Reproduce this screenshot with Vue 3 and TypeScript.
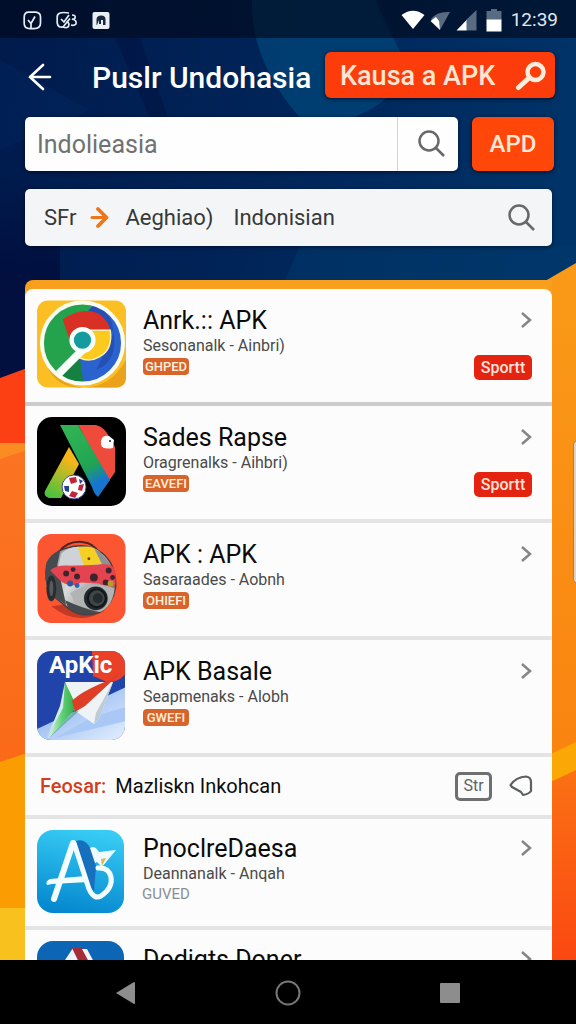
<script setup lang="ts">
import { ref } from 'vue'

interface AppEntry {
  id: string
  name: string
  subtitle?: string
  tag?: string
  plainTag?: boolean
  compact?: boolean
  action?: string
}

const query = ref('')

const topApps: AppEntry[] = [
  { id: 'chrome', name: 'Anrk.:: APK', subtitle: 'Sesonanalk - Ainbri)', tag: 'GHPED', action: 'Sportt' },
  { id: 'sades', name: 'Sades Rapse', subtitle: 'Oragrenalks - Aihbri)', tag: 'EAVEFI', action: 'Sportt' },
  { id: 'helmet', name: 'APK : APK', subtitle: 'Sasaraades - Aobnh', tag: 'OHIEFI' },
  { id: 'plane', name: 'APK Basale', subtitle: 'Seapmenaks - Alobh', tag: 'GWEFI' },
]

const moreApps: AppEntry[] = [
  { id: 'a3', name: 'PnoclreDaesa', subtitle: 'Deannanalk - Anqah', tag: 'GUVED', plainTag: true, compact: true },
  { id: 'dodi', name: 'Dodigts Doner', compact: true },
]

const groups = [topApps, moreApps]
</script>

<template>
  <div class="page">
    <svg class="backdrop" viewBox="0 0 576 1024" preserveAspectRatio="none" aria-hidden="true">
      <defs>
        <linearGradient id="navy" x1="0" y1="0" x2="1" y2="0.3">
          <stop offset="0" stop-color="#001a4c" />
          <stop offset="0.45" stop-color="#002458" />
          <stop offset="1" stop-color="#00356a" />
        </linearGradient>
        <linearGradient id="leftOrange" x1="0" y1="0" x2="0" y2="1">
          <stop offset="0" stop-color="#fb7422" />
          <stop offset="1" stop-color="#fa6a18" />
        </linearGradient>
        <linearGradient id="leftShade" x1="0" y1="0" x2="0" y2="1">
          <stop offset="0" stop-color="#000a38" stop-opacity="0" />
          <stop offset="0.5" stop-color="#000a38" stop-opacity="0.7" />
        </linearGradient>
        <linearGradient id="rightOrange" x1="0" y1="0" x2="0" y2="1">
          <stop offset="0" stop-color="#fa9a18" />
          <stop offset="1" stop-color="#f98410" />
        </linearGradient>
        <linearGradient id="rightLow" x1="0" y1="0" x2="0" y2="1">
          <stop offset="0" stop-color="#fa7414" />
          <stop offset="1" stop-color="#fb4711" />
        </linearGradient>
      </defs>
      <rect width="576" height="1024" fill="url(#navy)" />
      <path d="M252 0H375L405 62Q400 100 352 118H300Q250 60 252 0Z" fill="#004a7c" opacity="0.65" />
      <path d="M115 38H140L168 118H150Z" fill="#00123f" opacity="0.5" />
      <path d="M0 170L60 200V380H0Z" fill="url(#leftShade)" />
      <path d="M0 60L90 110L0 150Z" fill="#003069" opacity="0.3" />
      <path d="M300 246H576V290H280Z" fill="#003a6b" opacity="0.5" />
      <path d="M0 378L30 367V450H0Z" fill="#fd3f14" />
      <path d="M0 443H30V770H0Z" fill="url(#leftOrange)" />
      <path d="M0 443H30V449L0 459Z" fill="#fb8c23" />
      <path d="M0 762L30 752V910H0Z" fill="#fc9c03" />
      <path d="M0 908H30V964H0Z" fill="#f8c11e" />
      <path d="M540 284L576 263V760H540Z" fill="url(#rightOrange)" />
      <path d="M540 770L576 755V964H540Z" fill="url(#rightLow)" />
      <path d="M540 759L576 742V770L540 787Z" fill="#fba706" />
    </svg>

    <header class="status">
      <div class="status-left">
        <svg width="19" height="19" viewBox="0 0 19 19" fill="none" stroke="#e4edf5" stroke-width="1.7">
          <path d="M6 1.2H13Q17.5 2 17.5 6V12Q17.5 17.6 11 17.6H7Q1.2 17.6 1.2 12.5V6Q1.2 1.2 6 1.2Z" />
          <path d="M5 9L8 12.5L12 5.5M8 12.5V17" />
        </svg>
        <svg width="22" height="19" viewBox="0 0 22 19" fill="none" stroke="#e4edf5" stroke-width="1.7">
          <path d="M13 2Q1 0 1.2 6V12Q2 17 7 16L14 7.500" />
          <path d="M5 8L8 11L13 4M7 16Q13 18 13 13L11 10" />
          <path d="M16 4Q20 4 19 7Q18 9 16 8Q21 9 20 13Q18 15 15 14" />
        </svg>
        <svg width="18" height="19" viewBox="0 0 18 19">
          <rect x="0.500" y="1" width="17" height="17" rx="2" fill="#e9eef3" />
          <path d="M4.500 14V8Q5 4.500 9 4.500Q13.500 4.500 13.500 8V14H11V9H9V13H7V9L5 14Z" fill="#18283e" />
        </svg>
      </div>
      <div class="status-right">
        <svg width="24" height="20" viewBox="0 0 24 20">
          <path d="M0.500 5Q12 -3.500 23.500 5L12 19Z" fill="#fff" />
        </svg>
        <svg width="21" height="21" viewBox="0 0 21 21">
          <path d="M1 9Q7 1 20 2L10 20Z" fill="#596b80" />
          <path d="M0.500 11L6 7L9 11L10 20Z" fill="#fff" />
        </svg>
        <svg width="21" height="21" viewBox="0 0 21 21">
          <path d="M20.500 0V20.500H10V10Z" fill="#596b80" />
          <path d="M0.500 20.500L10.500 10V20.500Z" fill="#fff" />
        </svg>
        <svg width="16" height="23" viewBox="0 0 16 23">
          <path d="M5 0H11V2H15.500V11H0.500V2H5Z" fill="#596b80" />
          <rect x="0.500" y="10.500" width="15" height="12" fill="#fff" />
        </svg>
        <time class="clock">12:39</time>
      </div>
    </header>

    <div class="titlebar">
      <button class="icon-button back" type="button" aria-label="Back">
        <svg width="24" height="28" viewBox="0 0 24 28" fill="none" stroke="#fff" stroke-width="2.600" stroke-linecap="round">
          <path d="M15 2L2 14L15 26M2 14H22" />
        </svg>
      </button>
      <h1>Puslr Undohasia</h1>
      <button class="promo-button" type="button">
        <span>Kausa a APK</span>
        <svg width="32" height="30" viewBox="0 0 32 30" fill="none" stroke="#ffeedd" stroke-linecap="round">
          <circle cx="20.500" cy="11" r="8" stroke-width="4.500" />
          <path d="M14.500 16.500L3.500 26.500" stroke-width="5" />
        </svg>
      </button>
    </div>

    <form class="search-row" @submit.prevent>
      <div class="search-box">
        <input v-model="query" type="text" placeholder="Indolieasia" aria-label="Search apps" />
        <button class="icon-button search-go" type="submit" aria-label="Search">
          <svg class="lens" viewBox="0 0 28 28"><circle cx="11" cy="11" r="9.500" /><path d="M18 18L26 26" /></svg>
        </button>
      </div>
      <button class="apd" type="button">APD</button>
    </form>

    <nav class="filter" aria-label="Filter">
      <a href="#sfr">SFr</a>
      <svg class="arrow" width="19" height="23" viewBox="0 0 19 23" fill="none" stroke="#ef7618" stroke-linecap="round" stroke-linejoin="round">
        <path d="M2 11.500H14" stroke-width="3" />
        <path d="M8 3L16.500 11.500L8 20" stroke-width="3.800" />
      </svg>
      <a class="region" href="#region">Aeghiao)</a>
      <a href="#language">Indonisian</a>
      <button class="icon-button filter-go" type="button" aria-label="Search filters">
        <svg class="lens" viewBox="0 0 28 28"><circle cx="11" cy="11" r="9.500" /><path d="M18 18L26 26" /></svg>
      </button>
    </nav>

    <main class="panel">
      <template v-for="(group, g) in groups" :key="g">
        <section v-if="g === 1" class="feature">
          <strong>Feosar:</strong>
          <span class="feature-text">Mazliskn Inkohcan</span>
          <button class="str" type="button">Str</button>
          <button class="icon-button" type="button" aria-label="Tag">
            <svg width="24" height="22" viewBox="0 0 24 22" fill="none" stroke="#5c5f61" stroke-width="2.200" stroke-linejoin="round">
              <path d="M1.500 10Q7 2 17 1.500Q22 2 22 7V16Q20 19 14 20L12 17L3 12Z" />
            </svg>
          </button>
        </section>
        <ul>
          <li v-for="(app, i) in group" :key="app.id" :class="{ compact: app.compact, raised: g === 0 && i === 0 }">
            <svg v-if="app.id === 'chrome'" class="logo" viewBox="0 0 90 89">
              <defs>
                <clipPath id="disc"><circle cx="46" cy="43" r="41" /></clipPath>
              </defs>
              <rect width="90" height="88" rx="11" fill="#fbbf24" />
              <path d="M10 66Q20 90 48 88H79Q90 88 90 77V60Q75 88 46 88Q22 85 10 66Z" fill="#e9a21a" />
              <g clip-path="url(#disc)">
                <rect width="90" height="90" fill="#25a34c" />
                <path d="M56 0Q90 5 90 45Q85 85 46 90L43 58L74 30Z" fill="#2a62cf" />
                <path d="M40 0H60L75 20Q86 60 60 70L78 32Z" fill="#244fb5" />
                <path d="M30 0H62L50 12L28 19Z" fill="#25a34c" />
                <path d="M43 55L48 90Q20 88 20 72Z" fill="#158040" />
                <path d="M26 19Q45 6 62 13Q72 20 74 30H50Q38 30 34 43Z" fill="#d93026" />
                <path d="M50 30H74Q77 50 63 57Q53 63 43 58L50 45Z" fill="#fcc91f" stroke="#fff1b0" stroke-width="1.500" />
              </g>
              <path d="M49 47L22 74" stroke="#f7fffb" stroke-width="8" fill="none" />
              <circle cx="46" cy="40" r="11" fill="#139b9d" stroke="#f7fffb" stroke-width="4.500" />
              <circle cx="46" cy="43" r="41" fill="none" stroke="#f8fbf4" stroke-width="4" />
            </svg>

            <svg v-else-if="app.id === 'sades'" class="logo" viewBox="0 0 89 89">
              <defs>
                <linearGradient id="legA" x1="0.700" y1="0" x2="0.300" y2="1">
                  <stop offset="0.200" stop-color="#f6b51a" />
                  <stop offset="1" stop-color="#4cc33e" />
                </linearGradient>
                <linearGradient id="legB" x1="0.300" y1="0" x2="0.700" y2="1">
                  <stop offset="0" stop-color="#31b354" />
                  <stop offset="0.600" stop-color="#1fa454" />
                  <stop offset="0.850" stop-color="#1775d0" />
                </linearGradient>
              </defs>
              <rect width="89" height="89" rx="15" fill="#000" />
              <path d="M32 30L42 47L24 81H12Q6 79 8 74Z" fill="url(#legA)" />
              <path d="M41 8H59Q66 10 70 16L78 30V55L72 64Z" fill="#ee4b3d" />
              <path d="M23 8H41L73 63L61 80Q57 77 55 70Z" fill="url(#legB)" />
              <path d="M64 24Q65 18 72 19L77 23L76 31Q66 33 64 28Z" fill="#fff" />
              <circle cx="73" cy="24" r="1" fill="#222" />
              <circle cx="37" cy="70" r="12" fill="#fff" stroke="#3f4d8e" stroke-width="1" />
              <g fill="#c4243b">
                <path d="M32 61L39 60L40 65L34 67Z" /><path d="M42 68L47 67L45 74L41 73Z" />
                <path d="M35 74L41 76L38 81L32 79Z" />
              </g>
              <path d="M27 69L32 69L32 75L28 74ZM42 62L46 64L43 67Z" fill="#28408f" />
            </svg>

            <svg v-else-if="app.id === 'helmet'" class="logo" viewBox="0 0 89 90">
              <defs>
                <linearGradient id="shell" x1="0" y1="0" x2="1" y2="0.600">
                  <stop offset="0" stop-color="#77797c" />
                  <stop offset="0.500" stop-color="#dadada" />
                  <stop offset="1" stop-color="#77797c" />
                </linearGradient>
              </defs>
              <rect width="89" height="90" rx="14" fill="#fb5631" />
              <path d="M14 73Q40 94 67 78L75 65Z" fill="#c43925" />
              <path d="M22 18Q30 7 45 8Q57 9 62 19" fill="none" stroke="#4f2423" stroke-width="2" />
              <path d="M10 32Q16 18 27 15Q49 7 65 19Q80 31 79 54Q76 71 63 79Q45 86 31 75L14 61Q6 47 10 32Z" fill="url(#shell)" stroke="#4b393a" stroke-width="1.500" />
              <path d="M9 29Q14 19 23 17L20 31L24 49L29 72L13 60Q5 46 9 29Z" fill="#454a4e" />
              <ellipse cx="14" cy="55" rx="5" ry="13" fill="#282d31" />
              <ellipse cx="14" cy="55" rx="2" ry="8" fill="#575b5e" />
              <path d="M24 20Q31 13 42 13L46 30L21 33Z" fill="#cfd3d7" />
              <path d="M41 14Q54 10 63 18L65 30L47 32Z" fill="#f5cf23" />
              <path d="M57 14L64 19L74 31L65 30Z" fill="#8c9197" />
              <path d="M13 37Q18 31 33 32L61 31Q78 28 79 40V51Q73 57 62 50L44 49Q35 55 24 48Z" fill="#e44450" />
              <g fill="#40242d">
                <circle cx="29" cy="40" r="3" /><circle cx="36" cy="36" r="2.500" /><circle cx="40" cy="43" r="3" />
                <circle cx="57" cy="44" r="4" /><circle cx="72" cy="37" r="3" /><circle cx="76" cy="44" r="2.500" /><circle cx="69" cy="49" r="3" />
              </g>
              <circle cx="33" cy="50" r="3" fill="#2b579e" /><circle cx="40" cy="52" r="2.500" fill="#2e63b2" />
              <circle cx="74" cy="50" r="3" fill="#b3a128" />
              <circle cx="52" cy="25" r="1.500" fill="#604f18" />
              <path d="M33 60Q55 45 78 55Q76 73 63 79L39 72Z" fill="#b2b3b4" />
              <path d="M28 67Q43 74 61 79Q45 86 31 75Z" fill="#444a4d" />
              <circle cx="59" cy="65" r="12" fill="#22282b" />
              <circle cx="60" cy="65" r="9" fill="#404548" stroke="#101619" stroke-width="2" />
              <circle cx="61" cy="65" r="5" fill="#252a2d" />
            </svg>

            <svg v-else-if="app.id === 'plane'" class="logo" viewBox="0 0 89 89">
              <defs>
                <clipPath id="tile"><rect width="88" height="89" rx="14" /></clipPath>
                <linearGradient id="sky" x1="0" y1="0" x2="1" y2="1">
                  <stop offset="0" stop-color="#7ba6eb" />
                  <stop offset="1" stop-color="#e3efff" />
                </linearGradient>
                <linearGradient id="fold" x1="0" y1="0" x2="1" y2="0">
                  <stop offset="0" stop-color="#e4f7e9" />
                  <stop offset="0.500" stop-color="#5fcf75" />
                  <stop offset="1" stop-color="#29a642" />
                </linearGradient>
              </defs>
              <g clip-path="url(#tile)">
                <rect width="89" height="89" fill="#2144aa" />
                <path d="M0 78L89 36V89H0Z" fill="url(#sky)" />
                <path d="M18 87L55 66L89 56V70Z" fill="#a9c8f5" />
                <path d="M55 0H89V22Q82 32 70 31L56 25Z" fill="#eb4028" />
                <path d="M28 31H76L62 68L57 73L37 59Z" fill="#eef4f6" />
                <path d="M76 31L62 68L57 73L59 62Z" fill="#bfcbd4" />
                <path d="M28 31L40 56L11 88L25 50Z" fill="url(#fold)" />
                <path d="M28 31L23 55L10 87L26 57Z" fill="#d5e9ed" />
                <path d="M86 20L48 55L38 61L35 50Q43 41 70 30Z" fill="#e03d27" />
                <path d="M11 88L38 59L42 60Z" fill="#168b45" opacity="0.4" />
              </g>
              <text x="12" y="22" class="logo-text">ApKic</text>
            </svg>

            <svg v-else-if="app.id === 'a3'" class="logo" viewBox="0 0 87 83">
              <defs>
                <linearGradient id="cyan" x1="0.600" y1="0" x2="0.400" y2="1">
                  <stop offset="0" stop-color="#37ccf4" />
                  <stop offset="1" stop-color="#0588cf" />
                </linearGradient>
              </defs>
              <rect width="87" height="83" rx="16" fill="url(#cyan)" />
              <path d="M52 19Q57 14 62 22L79 20L65 37L60 32L55 35Z" fill="#effbff" />
              <path d="M39 11Q48 8 53 18L59 36L57 62L50 52Z" fill="#1670bd" />
              <path d="M36 13L17 69" stroke="#f3fcff" stroke-width="6" stroke-linecap="round" />
              <path d="M37 13L52 59Q57 70 64 66Q76 58 74 47Q72 37 61 38" fill="none" stroke="#f3fcff" stroke-width="5" stroke-linecap="round" />
              <path d="M10 55Q8 51 13 49L49 46L51 52L15 54Z" fill="#f3fcff" />
              <path d="M64 29L69 28L65 36Z" fill="#d8b957" />
            </svg>

            <svg v-else class="logo" viewBox="0 0 87 83">
              <rect width="87" height="83" rx="16" fill="#0d65b5" />
              <path d="M36 7L26 22V83H45L43 9Z" fill="#edf3fa" />
              <path d="M35 7H45L62 38H50Z" fill="#a62d38" />
              <path d="M45 8H50L65 36H60Z" fill="#f5f4f7" />
            </svg>

            <div class="details">
              <h2><a :href="'#' + app.id">{{ app.name }}</a></h2>
              <p v-if="app.subtitle">{{ app.subtitle }}</p>
              <span v-if="app.tag" class="tag" :class="{ plain: app.plainTag }">{{ app.tag }}</span>
            </div>
            <div class="side">
              <svg class="chevron" width="12" height="18" viewBox="0 0 12 18" aria-hidden="true"><path d="M2 2L10 9L2 16" /></svg>
              <button v-if="app.action" class="action" type="button">{{ app.action }}</button>
            </div>
          </li>
        </ul>
      </template>
    </main>

    <div class="edge-handle"></div>

    <footer class="system-nav">
      <button class="icon-button" type="button" aria-label="System back">
        <svg width="22" height="24" viewBox="0 0 22 24"><path d="M1 12L19 1Q20 1 20 2V22Q20 23 19 23Z" fill="#8d8d8d" /></svg>
      </button>
      <button class="icon-button" type="button" aria-label="Home">
        <svg width="26" height="26" viewBox="0 0 26 26"><circle cx="13" cy="13" r="11.500" fill="none" stroke="#777" stroke-width="2" /></svg>
      </button>
      <button class="icon-button" type="button" aria-label="Recent apps">
        <svg width="20" height="20" viewBox="0 0 20 20"><rect width="20" height="20" rx="1" fill="#8d8d8d" /></svg>
      </button>
    </footer>
  </div>
</template>

<style>
body {
  margin: 0;
  background: #000;
}
</style>

<style scoped>
.page,
.page * {
  box-sizing: border-box;
}

.page {
  position: relative;
  display: flex;
  flex-direction: column;
  height: 100vh;
  overflow: hidden;
  isolation: isolate;
  font-family: Roboto, "Liberation Sans", sans-serif;
  color: #0b0b0b;
}

.backdrop {
  position: absolute;
  inset: 0;
  width: 100%;
  height: 100%;
  z-index: -1;
}

button,
input {
  font: inherit;
  border: 0;
  margin: 0;
  padding: 0;
}

button {
  cursor: pointer;
}

a {
  color: inherit;
  text-decoration: none;
}

svg {
  display: block;
  flex: none;
}

.icon-button {
  display: flex;
  align-items: center;
  justify-content: center;
  background: none;
}

.status {
  flex: none;
  display: flex;
  align-items: center;
  justify-content: space-between;
  height: 38px;
  padding: 2px 18px 0 23px;
  background: rgba(0, 6, 22, 0.6);
}

.status-left {
  display: flex;
  gap: 14px;
}

.status-right {
  display: flex;
  align-items: center;
  gap: 5px;
}

.status-right svg:nth-of-type(4) {
  margin: 0 4px;
}

.clock {
  color: #e1e8ef;
  font-size: 19px;
  line-height: 24px;
}

.titlebar {
  flex: none;
  display: flex;
  align-items: flex-end;
  height: 46px;
  margin: 14px 21px 0 28px;
}

.back {
  width: 24px;
  height: 42px;
}

h1 {
  margin: 0 0 0 40px;
  color: #fff;
  font-size: 30px;
  line-height: 40px;
  font-weight: 500;
  white-space: nowrap;
}

.promo-button {
  display: flex;
  align-items: center;
  justify-content: space-between;
  width: 230px;
  height: 46px;
  margin-left: auto;
  padding: 2px 8px 0 15px;
  border-radius: 6px;
  background: #fd3c0b;
  box-shadow: 0 1px 4px rgba(0, 0, 20, 0.7);
  color: #ffe6d2;
  font-size: 27px;
  font-weight: 500;
  white-space: nowrap;
}

.search-row {
  flex: none;
  display: flex;
  gap: 14px;
  height: 54px;
  margin: 19px 22px 0 25px;
}

.search-box {
  flex: 1;
  min-width: 0;
  display: flex;
  border-radius: 5px;
  background: #fefefe;
  box-shadow: 0 1px 4px rgba(0, 0, 20, 0.6);
}

.search-box input {
  flex: 1;
  min-width: 0;
  padding: 0 12px;
  background: none;
  color: #666;
  font-size: 25px;
}

.search-box input::placeholder {
  color: #717171;
  opacity: 1;
}

.search-go {
  width: 61px;
  padding-left: 7px;
  border-left: 1px solid #d4d4d4;
}

.lens {
  width: 28px;
  height: 28px;
  fill: none;
  stroke: #666869;
  stroke-width: 2.5;
}

.apd {
  width: 82px;
  border-radius: 6px;
  background: #ff470a;
  box-shadow: 0 1px 4px rgba(0, 0, 20, 0.7);
  color: #ffe9d6;
  font-size: 24px;
  font-weight: 500;
}

.filter {
  flex: none;
  display: flex;
  align-items: center;
  height: 57px;
  margin: 18px 24px 0 25px;
  padding: 0 16px 0 19px;
  border-radius: 5px;
  background: #f4f5f6;
  box-shadow: 0 1px 4px rgba(0, 0, 20, 0.6);
  color: #36383a;
  font-size: 22px;
}

.arrow {
  margin: 0 16px 0 14px;
}

.region {
  margin-right: 20px;
}

.filter-go {
  margin-left: auto;
}

.panel {
  flex: 1;
  min-height: 0;
  overflow: hidden;
  margin: 34px 24px 0 25px;
  padding-top: 9px;
  border-radius: 8px 0 0 0;
  background: #f8a01d;
}

ul {
  list-style: none;
  margin: 0;
  padding: 0;
}

li {
  display: flex;
  height: 117px;
  padding: 11px 20px 0 12px;
  border-bottom: 4px solid #e4e4e4;
  background: #fcfcfc;
}

li.compact {
  height: 111px;
}

li.raised {
  border-bottom-color: #ccc;
  border-radius: 8px 8px 0 0;
}

.logo {
  width: 89px;
  height: 89px;
  overflow: visible;
}

.compact .logo {
  width: 87px;
  height: 83px;
}

.logo-text {
  fill: #fff;
  font-family: Roboto, sans-serif;
  font-size: 24px;
  font-weight: 700;
}

.details {
  flex: 1;
  min-width: 0;
  margin-left: 17px;
}

.compact .details {
  margin-left: 19px;
}

h2 {
  margin: 5px 0 0;
  font-size: 25px;
  line-height: 32px;
  font-weight: 400;
  white-space: nowrap;
}

.compact h2 {
  margin-top: 3px;
}

.details p {
  margin: 0;
  color: #4a4a4a;
  font-size: 16px;
  line-height: 17px;
  white-space: nowrap;
}

.tag {
  display: flex;
  align-items: center;
  justify-content: center;
  width: 46px;
  height: 17px;
  margin-top: 4px;
  border-radius: 4px;
  background: #d9642b;
  color: #fff0dc;
  font-size: 13px;
  line-height: 17px;
  font-weight: 500;
}

.tag.plain {
  background: none;
  color: #8b8f92;
  font-size: 15px;
  font-weight: 400;
}

.side {
  display: flex;
  flex-direction: column;
  align-items: flex-end;
}

.chevron {
  margin-top: 11px;
  fill: none;
  stroke: #858585;
  stroke-width: 2.5;
}

.compact .chevron {
  margin-top: 9px;
}

.action {
  width: 58px;
  height: 25px;
  margin-top: 26px;
  border-radius: 5px;
  background: #e42410;
  color: #ffe3d8;
  font-size: 16px;
  line-height: 25px;
  font-weight: 500;
}

.feature {
  display: flex;
  align-items: center;
  height: 62px;
  padding: 0 19px 0 15px;
  border-bottom: 4px solid #e4e4e4;
  background: #fcfcfc;
  font-size: 20px;
}

.feature strong {
  color: #d43d1a;
  font-weight: 500;
}

.feature-text {
  margin-left: 9px;
  white-space: nowrap;
}

.str {
  width: 37px;
  height: 29px;
  margin: 0 17px 0 auto;
  border: 3px solid #6d6f71;
  border-radius: 5px;
  background: #fafafa;
  color: #606365;
  font-size: 16px;
  line-height: 20px;
}

/* Pull tab floating over the right edge of the screen */
.edge-handle {
  position: absolute;
  top: 43%;
  right: -7px;
  width: 10px;
  height: 14%;
  border: 1px solid #98826c;
  border-radius: 5px;
  background: #ddd3c7;
}

.system-nav {
  flex: none;
  display: grid;
  grid-template-columns: repeat(3, 1fr);
  height: 64px;
  padding: 2px 45px 0;
  background: #000;
}
</style>
